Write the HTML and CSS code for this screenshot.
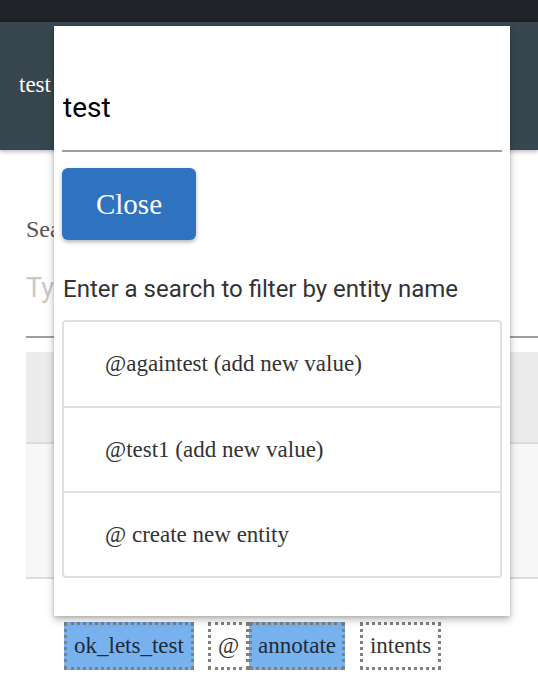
FILE: index.html
```html
<!DOCTYPE html>
<html>
<head>
<meta charset="utf-8">
<link rel="stylesheet" href="styles.css">
</head>
<body>
<div class="topbar"></div>
<header class="header"><span class="header-title">test</span></header>
<main class="content">
  <div class="search-label">Search intents</div>
  <div class="search-input">Type to search</div>
  <div class="rows">
    <div class="row row-head"></div>
    <div class="row row-body"></div>
  </div>
  <div class="chips">
    <span class="chip chip-entity">ok_lets_test</span>
    <span class="chip chip-plain chip-at">@</span>
    <span class="chip chip-entity chip-join">annotate</span>
    <span class="chip chip-plain chip-last">intents</span>
  </div>
</main>
<div class="modal">
  <input class="modal-input" type="text" value="test">
  <button class="close-btn">Close</button>
  <p class="hint">Enter a search to filter by entity name</p>
  <ul class="options">
    <li class="option">@againtest (add new value)</li>
    <li class="option">@test1 (add new value)</li>
    <li class="option">@ create new entity</li>
  </ul>
</div>
</body>
</html>
```
FILE: styles.css
```css
* { box-sizing: border-box; }
html, body { margin: 0; padding: 0; }
body {
  width: 538px;
  height: 678px;
  overflow: hidden;
  background: #fff;
  font-family: "Liberation Serif", "Times New Roman", serif;
  position: relative;
}
.topbar { height: 22px; background: #202428; }
.header {
  height: 128px;
  background: #38474f;
  box-shadow: 0 2px 4px rgba(0,0,0,0.25);
  display: flex;
  align-items: center;
  padding-left: 19px;
  position: relative;
}
.header-title {
  color: #fff;
  font-size: 23px;
  margin-top: -2px;
}
.content { padding-left: 26px; }
.search-label {
  margin-top: 66px;
  font-size: 24px;
  color: #555;
  line-height: 26px;
}
.search-input {
  margin-top: 30px;
  font-family: Roboto, sans-serif;
  font-size: 27px;
  color: #c8c8c8;
  line-height: 32px;
  padding-bottom: 32px;
  border-bottom: 2px solid #9e9e9e;
}
.rows { margin-top: 14px; }
.row-head { height: 92px; background: #ececec; border-bottom: 2px solid #dcdcdc; }
.row-body { height: 135px; background: #f7f7f7; border-bottom: 2px solid #dcdcdc; }
.chips {
  display: flex;
  margin-top: 43px;
  padding-left: 38px;
}
.chip {
  height: 48px;
  border: 3px dotted #808080;
  font-size: 23px;
  line-height: 42px;
  padding: 0 7px;
  color: #1f2a38;
}
.chip-entity { background: #78b2ee; }
.chip-plain { background: #fff; color: #333; }
.chip-at { margin-left: 14px; padding: 0 7px; }
.chip-join { margin-left: 0; padding: 0 6px; }
.chip-last { margin-left: 15px; }

.modal {
  position: absolute;
  left: 54px;
  top: 26px;
  width: 456px;
  height: 590px;
  background: #fff;
  padding: 0 8px;
  box-shadow: 0 4px 8px rgba(0,0,0,0.25), 0 1px 3px rgba(0,0,0,0.15);
}
.modal-input {
  display: block;
  width: 100%;
  border: none;
  border-bottom: 2px solid #9e9e9e;
  outline: none;
  background: transparent;
  font-family: Roboto, sans-serif;
  font-size: 28px;
  line-height: 32px;
  height: 126px;
  padding: 65px 1px 27px;
  color: #000;
  margin: 0;
}
.close-btn {
  display: block;
  margin-top: 16px;
  width: 134px;
  height: 72px;
  border: none;
  border-radius: 6px;
  background: #2f72bf;
  color: #fff;
  font-family: "Liberation Serif", "Times New Roman", serif;
  font-size: 29px;
  box-shadow: 0 2px 4px rgba(0,0,0,0.3);
  padding: 0;
}
.hint {
  margin: 36px 0 0 1px;
  font-family: Roboto, sans-serif;
  font-size: 24px;
  line-height: 26px;
  color: #333;
}
.options {
  list-style: none;
  margin: 18px 0 0;
  padding: 0;
  border: 2px solid #e0e0e0;
  border-radius: 4px;
}
.option {
  height: 85px;
  display: flex;
  align-items: center;
  padding-left: 41px;
  font-size: 23px;
  color: #333;
  border-top: 2px solid #e0e0e0;
}
.option:first-child { border-top: none; height: 84px; }
```
